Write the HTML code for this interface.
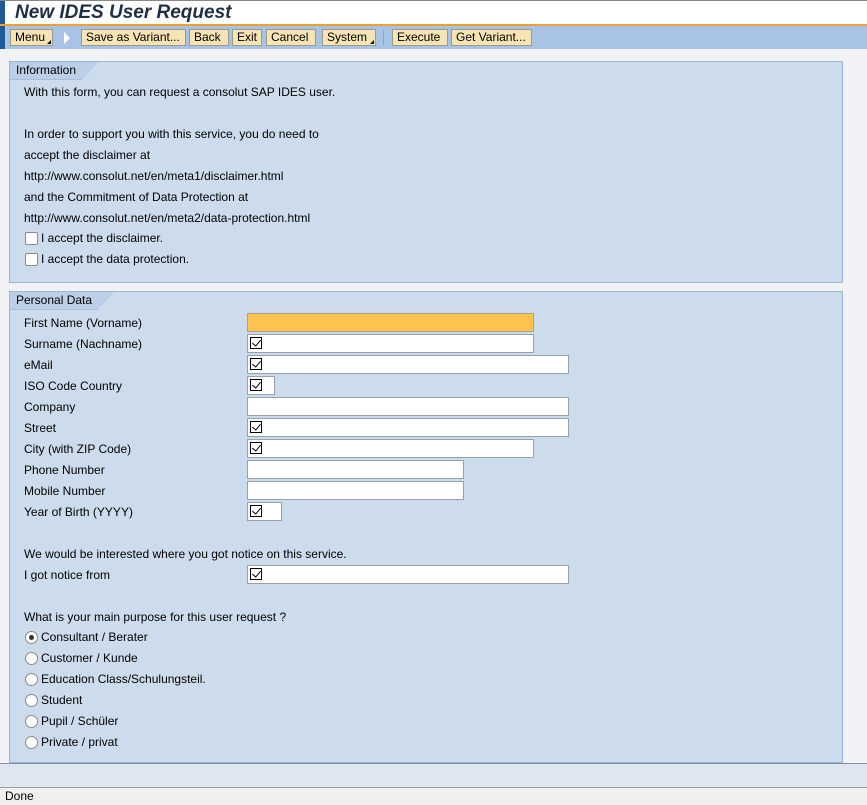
<!DOCTYPE html>
<html><head><meta charset="utf-8"><style>
*{box-sizing:border-box;margin:0;padding:0}
body{width:867px;height:804px;background:#f0f2f5;font-family:"Liberation Sans",Arial,sans-serif;font-size:12px;color:#000;position:relative;overflow:hidden}
.abs{position:absolute}
#title{left:0;top:0;width:867px;height:24px;background:#fff;border-top:1px solid #888}
#title .bar{position:absolute;left:0;top:0;width:5px;height:48px;background:#1f5a96}
#title span{position:absolute;left:15px;top:1px;font-size:19px;font-weight:bold;font-style:italic;color:#1e2e45}
#orange{left:0;top:24px;width:867px;height:2px;background:#f0a030}
#tb{left:0;top:26px;width:867px;height:23px;background:#a7c3e6}
.btn{position:absolute;top:3px;height:17px;background:#f6e4b4;border:1px solid #9a9a8a;font-size:12px;line-height:15px;padding:0 4px;color:#000;white-space:nowrap}
.btn.m:after{content:"";position:absolute;right:1px;bottom:1px;border-left:4px solid transparent;border-bottom:4px solid #000}
.sep{position:absolute;top:4px;width:1px;height:15px;background:#fff;border-left:1px solid #8aa}
.panel{position:absolute;left:9px;width:834px;background:#cddcec;border:1px solid #9ab6d6}
.tab{position:absolute;left:0;top:0;height:18px;background:#bccfe6;padding:0 6px;line-height:17px;border-bottom:1px solid #a8c0dc}
.tab:after{content:"";position:absolute;right:-16px;top:0;border-top:18px solid #bccfe6;border-right:16px solid transparent}
.t{position:absolute;left:14px;white-space:nowrap}
.cb{position:absolute;left:15px;width:13px;height:13px;background:#fff;border:1px solid #8a8a8a;border-radius:2px}
.inp{position:absolute;left:237px;height:19px;background:#fff;border:1px solid #9aa0a8}
.inp.chk:before{content:"";position:absolute;left:2px;top:2px;width:10px;height:10px;border:1px solid #000}
.inp.chk:after{content:"";position:absolute;left:6px;top:3px;width:4px;height:7px;border-right:1px solid #000;border-bottom:1px solid #000;transform:rotate(40deg)}
.rad{position:absolute;left:15px;width:13px;height:13px;border-radius:50%;background:#fff;border:1px solid #8a8a8a}
.rad.on:after{content:"";position:absolute;left:3px;top:3px;width:5px;height:5px;border-radius:50%;background:#333}
</style></head><body>
<div id="title" class="abs"><div class="bar"></div><span>New IDES User Request</span></div>
<div id="orange" class="abs"></div>
<div id="tb" class="abs">
<div class="bar abs" style="left:0;top:0;width:5px;height:23px;background:#1f5a96"></div>
<div class="btn m" style="left:10px;width:43px">Menu</div>
<div class="abs" style="left:64px;top:6px;border-left:6px solid #fff;border-top:6px solid transparent;border-bottom:6px solid transparent"></div>
<div class="btn" style="left:81px;width:105px">Save as Variant...</div>
<div class="btn" style="left:189px;width:40px">Back</div>
<div class="btn" style="left:232px;width:30px">Exit</div>
<div class="btn" style="left:266px;width:50px">Cancel</div>
<div class="btn m" style="left:322px;width:54px">System</div>
<div class="sep" style="left:383px"></div>
<div class="btn" style="left:392px;width:56px">Execute</div>
<div class="btn" style="left:451px;width:81px">Get Variant...</div>
</div>

<div class="panel" style="top:61px;height:222px">
<div class="tab">Information</div>
<div class="t" style="top:23px">With this form, you can request a consolut SAP IDES user.</div>
<div class="t" style="top:65px">In order to support you with this service, you do need to</div>
<div class="t" style="top:86px">accept the disclaimer at</div>
<div class="t" style="top:107px">http://www.consolut.net/en/meta1/disclaimer.html</div>
<div class="t" style="top:128px">and the Commitment of Data Protection at</div>
<div class="t" style="top:149px">http://www.consolut.net/en/meta2/data-protection.html</div>
<div class="cb" style="top:170px"></div><div class="t" style="left:31px;top:169px">I accept the disclaimer.</div>
<div class="cb" style="top:191px"></div><div class="t" style="left:31px;top:190px">I accept the data protection.</div>
</div>

<div class="panel" style="top:291px;height:472px">
<div class="tab">Personal Data</div>
<div class="t" style="top:24px">First Name (Vorname)</div>
<div class="inp" style="top:21px;width:287px;background:#fcc350;border-color:#a8a090"></div>
<div class="t" style="top:45px">Surname (Nachname)</div>
<div class="inp chk" style="top:42px;width:287px"></div>
<div class="t" style="top:66px">eMail</div>
<div class="inp chk" style="top:63px;width:322px"></div>
<div class="t" style="top:87px">ISO Code Country</div>
<div class="inp chk" style="top:84px;width:28px"></div>
<div class="t" style="top:108px">Company</div>
<div class="inp" style="top:105px;width:322px"></div>
<div class="t" style="top:129px">Street</div>
<div class="inp chk" style="top:126px;width:322px"></div>
<div class="t" style="top:150px">City (with ZIP Code)</div>
<div class="inp chk" style="top:147px;width:287px"></div>
<div class="t" style="top:171px">Phone Number</div>
<div class="inp" style="top:168px;width:217px"></div>
<div class="t" style="top:192px">Mobile Number</div>
<div class="inp" style="top:189px;width:217px"></div>
<div class="t" style="top:213px">Year of Birth (YYYY)</div>
<div class="inp chk" style="top:210px;width:35px"></div>
<div class="t" style="top:255px">We would be interested where you got notice on this service.</div>
<div class="t" style="top:276px">I got notice from</div>
<div class="inp chk" style="top:273px;width:322px"></div>
<div class="t" style="top:318px">What is your main purpose for this user request ?</div>
<div class="rad on" style="top:339px"></div><div class="t" style="left:31px;top:338px">Consultant / Berater</div>
<div class="rad" style="top:360px"></div><div class="t" style="left:31px;top:359px">Customer / Kunde</div>
<div class="rad" style="top:381px"></div><div class="t" style="left:31px;top:380px">Education Class/Schulungsteil.</div>
<div class="rad" style="top:402px"></div><div class="t" style="left:31px;top:401px">Student</div>
<div class="rad" style="top:423px"></div><div class="t" style="left:31px;top:422px">Pupil / Schüler</div>
<div class="rad" style="top:444px"></div><div class="t" style="left:31px;top:443px">Private / privat</div>
</div>

<div class="abs" style="left:0;top:763px;width:867px;height:24px;background:#e0e6ef;border-top:1px solid #7d8ea6"></div>
<div class="abs" style="left:0;top:787px;width:867px;height:17px;background:#f0efed;border-top:1px solid #9aa0a8;padding-left:5px;line-height:17px;font-size:12px">Done</div>
</body></html>
